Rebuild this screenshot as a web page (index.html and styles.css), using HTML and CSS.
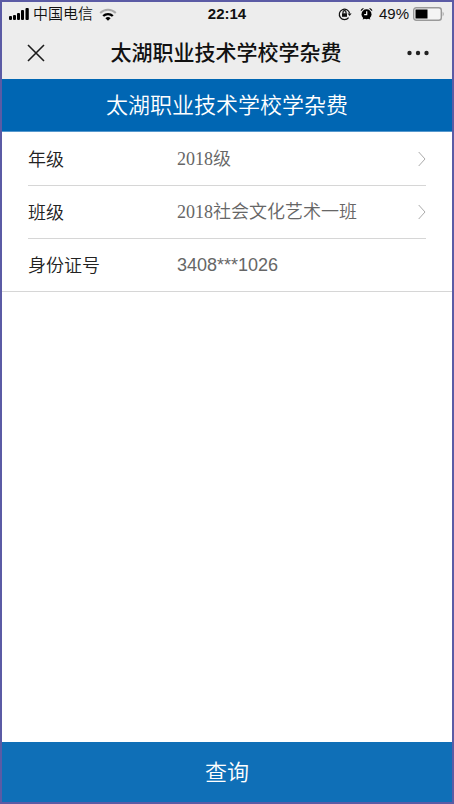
FILE: index.html
```
<!DOCTYPE html>
<html lang="zh-CN">
<head>
<meta charset="utf-8">
<meta name="viewport" content="width=device-width, initial-scale=1">
<title>太湖职业技术学校学杂费</title>
<link rel="stylesheet" href="styles.css">
</head>
<body>
<div class="screen">
  <div class="status">
    <div class="status-left">
      <svg class="signal" width="20" height="12" viewBox="0 0 20 12" aria-hidden="true">
        <rect x="0" y="8" width="3" height="4" rx="1"/><rect x="4" y="7" width="3" height="5" rx="1"/><rect x="8" y="5" width="3" height="7" rx="1"/><rect x="12" y="2" width="3" height="10" rx="1"/><rect x="16.5" y="0" width="3.3" height="12" rx="1"/>
      </svg>
      <span>中国电信</span>
      <svg class="wifi" width="18" height="13" viewBox="0 0 18 13" fill="none" stroke-width="2" aria-hidden="true">
        <path d="M1.2 5a11 11 0 0 1 15.6 0" stroke="#aaa"/>
        <path d="M4.2 8a7 7 0 0 1 9.6 0" stroke="#000" stroke-width="2.4"/>
        <path d="M6.4 10.2a4 4 0 0 1 5.2 0L9 12.8z" fill="#000"/>
      </svg>
    </div>
    <time class="clock">22:14</time>
    <div class="status-right">
      <svg width="14" height="14" viewBox="0 0 14 14" fill="none" stroke="#111" stroke-width="1.2" aria-hidden="true">
        <path d="M10.6 10.6A5.2 5.2 0 1 1 11.6 6.4"/><path d="M9.6 6.4h4L11.6 9z" fill="#111" stroke="none"/>
        <rect x="4" y="6.3" width="5" height="3.5" fill="#111" stroke="none"/><path d="M5 6.5V5.2a1.5 1.5 0 0 1 3 0v1.3"/>
      </svg>
      <svg class="alarm" width="13" height="14" viewBox="0 0 13 14" aria-hidden="true">
        <circle cx="6.5" cy="7.2" r="5"/><path d="M.8 4.2a2.3 2.3 0 0 1 3.200-2.600zM12.200 4.200a2.300 2.300 0 0 0-3.200-2.600zM2.600 12.600l1-2.400 1.500 1.500zM10.400 12.600l-1-2.400-1.500 1.500z"/>
        <path d="M6.700 4.200v3.400H4.200" fill="none" stroke="#fff" stroke-width="1.200"/>
      </svg>
      <span>49%</span>
      <svg width="32" height="14" viewBox="0 0 32 14" aria-hidden="true">
        <rect x=".7" y=".7" width="27.600" height="12.600" rx="2.500" fill="#f4f4f4" stroke="#999" stroke-width="1.400"/><rect x="2.500" y="2.500" width="12" height="9"/><path d="M29.700 4.500q2 2.500 0 5z" fill="#999"/>
      </svg>
    </div>
  </div>
  <header class="nav">
    <button class="icon-button" type="button" aria-label="关闭">
      <svg width="18" height="18" viewBox="0 0 18 18" fill="none" stroke="#1c1c1c" stroke-width="1.600"><path d="M1 1l16 16M17 1L1 17"/></svg>
    </button>
    <h1>太湖职业技术学校学杂费</h1>
    <button class="icon-button" type="button" aria-label="更多">
      <svg width="22" height="6" viewBox="0 0 22 6" fill="#222"><circle cx="2.500" cy="3" r="2.200"/><circle cx="11" cy="3" r="2.200"/><circle cx="19.500" cy="3" r="2.200"/></svg>
    </button>
  </header>
  <h2 class="banner">太湖职业技术学校学杂费</h2>
  <form class="form">
    <div class="fields">
      <div class="row">
        <label for="grade">年级</label>
        <select id="grade"><option>2018级</option></select>
        <svg class="chevron" width="8" height="16" viewBox="0 0 8 16" aria-hidden="true"><path d="M.7 1L7 8 .7 15"/></svg>
      </div>
      <div class="row">
        <label for="class">班级</label>
        <select id="class"><option>2018社会文化艺术一班</option></select>
        <svg class="chevron" width="8" height="16" viewBox="0 0 8 16" aria-hidden="true"><path d="M.7 1L7 8 .7 15"/></svg>
      </div>
      <div class="row">
        <label for="idno">身份证号</label>
        <input id="idno" type="text" value="3408***1026">
      </div>
    </div>
    <button class="submit" type="submit">查询</button>
  </form>
</div>
</body>
</html>
```
FILE: styles.css
```
* {
  box-sizing: border-box;
}

body {
  margin: 0;
  font-family: "Liberation Sans", "Noto Sans CJK SC", sans-serif;
  font-weight: 350;
  color: #222;
}

button,
input,
select {
  margin: 0;
  padding: 0;
  border: 0;
  background: none;
  font: inherit;
  color: inherit;
  appearance: none;
}

svg {
  display: block;
  flex: none;
}

h1,
h2 {
  margin: 0;
}

.screen {
  display: flex;
  flex-direction: column;
  min-height: 100vh;
  border: 2px solid #5b5ba5;
  background: #fff;
}

.status {
  display: grid;
  grid-template-columns: 1fr auto 1fr;
  align-items: center;
  height: 24px;
  padding: 0 7px;
  background: #ededed;
  color: #111;
  font-size: 15px;
  line-height: 24px;
}

.status-left,
.status-right {
  display: flex;
  align-items: center;
}

.status-left {
  gap: 4px;
}

.wifi {
  margin-left: 2px;
}

.status-right {
  justify-content: flex-end;
  gap: 4px;
}

.alarm {
  margin: 0 2px 0 4px;
}

.clock {
  font-weight: bold;
}

.nav {
  display: flex;
  align-items: center;
  justify-content: space-between;
  height: 53px;
  padding: 0 23px 0 25px;
  background: #ededed;
}

.nav h1 {
  font-size: 21px;
  font-weight: 500;
  line-height: 30px;
  color: #111;
}

.icon-button {
  display: flex;
  align-items: center;
  height: 44px;
}

.banner {
  height: 53px;
  border-bottom: 1px solid #5698cd;
  background: #0066b3;
  color: #fff;
  font-size: 22px;
  font-weight: 350;
  line-height: 54px;
  text-align: center;
}

.form {
  display: flex;
  flex: 1;
  flex-direction: column;
}

.fields {
  flex: 1;
  padding-top: 1px;
}

.row {
  display: flex;
  align-items: center;
  height: 53px;
  margin: 0 26px;
  border-bottom: 1px solid #d6d6d6;
  font-size: 18px;
}

.row:last-child {
  margin: 0;
  padding: 0 26px;
}

.row label {
  width: 149px;
  padding-bottom: 2px;
}

.row select,
.row input {
  flex: 1;
  min-width: 0;
  height: 52px;
  color: #666;
}

.row select {
  font-family: "Liberation Serif", "Noto Sans CJK SC", serif;
}

.chevron {
  fill: none;
  stroke: #aaa;
  stroke-width: 1;
}

.submit {
  height: 60px;
  padding-bottom: 4px;
  background: #0f6fb7;
  color: #fff;
  font-size: 22px;
}
```
